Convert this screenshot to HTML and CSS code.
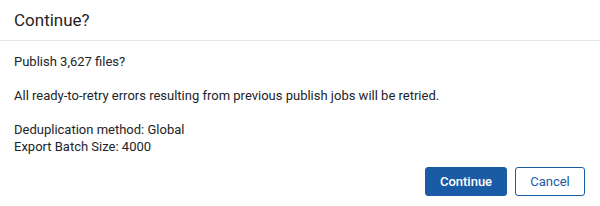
FILE: index.html
```html
<!DOCTYPE html>
<html>
<head>
<meta charset="utf-8">
<link rel="stylesheet" href="styles.css">
</head>
<body>
<div class="dialog">
  <div class="header"><h2 class="title">Continue?</h2></div>
  <div class="body">
    <p>Publish 3,627 files?</p>
    <p>All ready-to-retry errors resulting from previous publish jobs will be retried.</p>
    <p>Deduplication method: Global<br>Export Batch Size: 4000</p>
  </div>
  <div class="footer">
    <button class="btn btn-primary">Continue</button>
    <button class="btn btn-secondary">Cancel</button>
  </div>
</div>
</body>
</html>
```
FILE: styles.css
```css
html, body {
  margin: 0;
  padding: 0;
  background: #ffffff;
}
body {
  font-family: Roboto, "Liberation Sans", sans-serif;
  color: #212529;
}
.dialog {
  width: 600px;
  height: 206px;
  display: flex;
  flex-direction: column;
}
.header {
  border-bottom: 1px solid #e3e8ef;
  display: flex;
  align-items: center;
  padding: 0 14px;
  box-sizing: border-box;
  height: 41px;
}
.title {
  margin: 0;
  font-size: 17px;
  font-weight: 400;
  color: #1f2328;
}
.body {
  padding: 12px 14px 0;
  font-size: 13px;
  line-height: 17px;
}
.body p {
  margin: 0 0 17px;
}
.body p:last-child {
  margin-bottom: 0;
}
.footer {
  display: flex;
  justify-content: flex-end;
  gap: 8px;
  padding: 12px 15px 0 0;
}
.btn {
  font-family: Roboto, "Liberation Sans", sans-serif;
  font-size: 13px;
  height: 29px;
  border-radius: 3px;
  padding: 0 12px;
  box-sizing: border-box;
  cursor: pointer;
}
.btn-primary {
  background: #1a5ba6;
  border: 1px solid #1a5ba6;
  color: #ffffff;
  font-weight: 500;
  width: 82px;
}
.btn-secondary {
  background: #ffffff;
  border: 1px solid #1a5ba6;
  color: #1a5ba6;
  width: 70px;
}
```
